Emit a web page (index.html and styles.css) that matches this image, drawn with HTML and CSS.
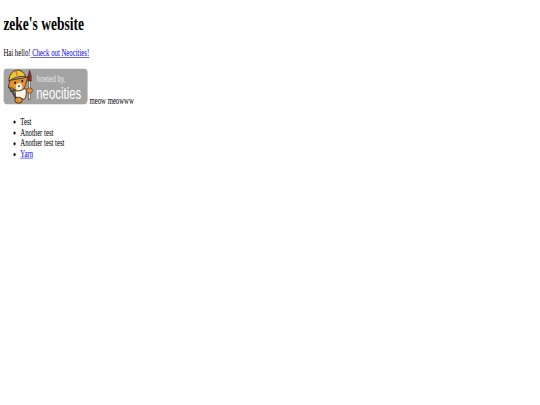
FILE: index.html
```html
<!DOCTYPE html>
<html lang="en">
<head>
<meta charset="UTF-8">
<title>zeke's website</title>
<link rel="stylesheet" href="styles.css">
</head>
<body>
<div class="page">
  <h1>zeke's website</h1>
  <p>Hai hello!<a href="#"> Check out Neocities!</a></p>
  <p>
    <svg class="badge" viewBox="0 0 200 60" width="200" height="60" role="img" aria-label="hosted by neocities">
      <rect width="200" height="60" rx="8" fill="#a3a3a3"/>
      <!-- wrench -->
      <path d="M20 36 L34 56" stroke="#4a4a4a" stroke-width="5"/>
      <path d="M13 28 L18 38 L27 36 L26 27" fill="none" stroke="#4a4a4a" stroke-width="3.5"/>
      <!-- body and feet -->
      <path d="M28 36 L54 34 Q56 46 50 51 L32 51 Q27 46 28 36 Z" fill="#fbf3e4" stroke="#2e2013" stroke-width="1.5"/>
      <ellipse cx="36" cy="53" rx="9" ry="5" fill="#e8902c" stroke="#2e2013" stroke-width="1.5"/>
      <!-- head -->
      <path d="M15 20 L12 32 L22 33 Q30 40 42 37 Q52 34 54 24 L58 14 L48 16 Z" fill="#e8902c" stroke="#2e2013" stroke-width="1.5"/>
      <path d="M29 28 Q36 22 43 26 L45 33 Q38 39 31 35 Z" fill="#fbf3e4"/>
      <circle cx="28" cy="24" r="2.2" fill="#1c1c1c"/>
      <circle cx="45" cy="21" r="2.2" fill="#1c1c1c"/>
      <path d="M34 29 L40 28 L37 32 Z" fill="#1c1c1c"/>
      <!-- helmet -->
      <path d="M13 21 Q14 5 32 3 Q47 2 53 14 Q34 11 13 21 Z" fill="#f2c230" stroke="#2e2013" stroke-width="1.5"/>
      <path d="M30 4 L33 12" stroke="#b98a14" stroke-width="3"/>
      <!-- brush -->
      <rect x="60" y="20" width="4.5" height="32" fill="#e9dcc0" stroke="#2e2013"/>
      <path d="M62 3 Q68 12 66 21 L58 21 Q57 12 62 3 Z" fill="#8c2f2a" stroke="#2e2013"/>
      <ellipse cx="62" cy="37" rx="7" ry="4.5" fill="#e8902c" stroke="#2e2013"/>
      <text class="badge-small" x="79" y="22">hosted by,</text>
      <text class="badge-big" x="78" y="51">neocities</text>
    </svg>
    meow meowww
  </p>
  <ul>
    <li>Test</li>
    <li>Another test</li>
    <li>Another test test</li>
    <li><a href="#">Yarn</a></li>
  </ul>
</div>
</body>
</html>
```

FILE: styles.css
```css
html, body { margin: 0; background: #fff; overflow: hidden; }

/* the shot is a wide page squeezed into 540x405 */
.page {
  display: flow-root;
  padding: 0 8px;
  font-family: "Liberation Serif", serif;
  font-size: 16px;
  color: #000;
  transform: scale(0.4219, 0.6);
  transform-origin: 0 0;
}

.page a { color: #00e; }

.badge-small { font-family: "Liberation Sans", sans-serif; font-size: 15px; fill: #e8e8e8; }
.badge-big { font-family: "Liberation Sans", sans-serif; font-size: 27px; fill: #fff; }
```
